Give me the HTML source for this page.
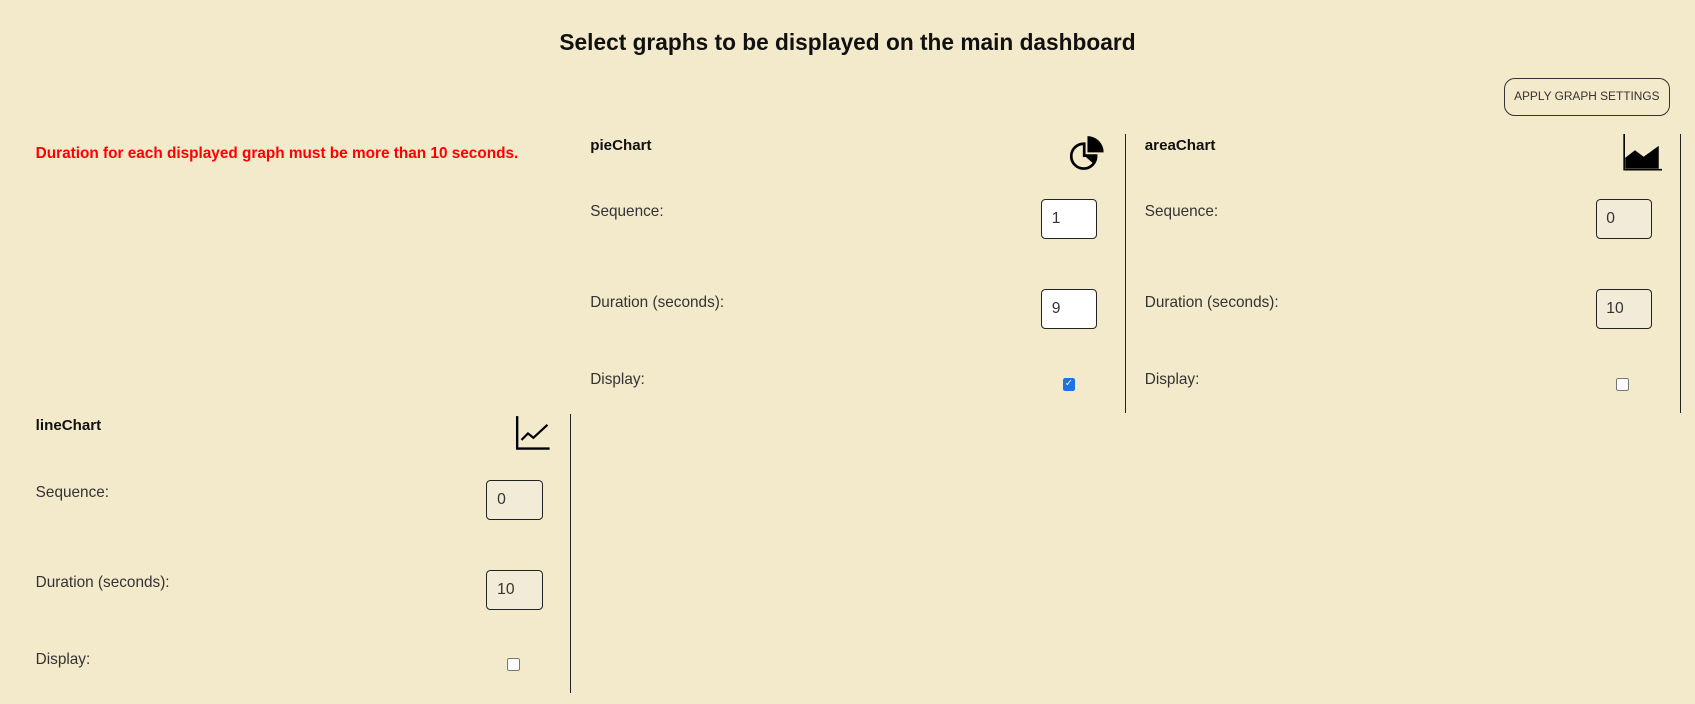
<!DOCTYPE html>
<html><head><meta charset="utf-8"><style>
html,body{margin:0;padding:0;background:#f3e9cb;overflow:hidden}
#w{zoom:1.081;position:relative;width:1568px;height:651px;font-family:"Liberation Sans",sans-serif;color:#333}
.a{position:absolute}
h1{position:absolute;left:0;width:1568px;top:27px;margin:0;text-align:center;font-size:21px;font-weight:bold;color:#111}
.btn{left:1391px;top:72px;width:152px;height:33px;border:1px solid #333;border-radius:10px;font-size:11px;line-height:33px;text-align:center;color:#333}
.red{left:33px;top:134px;color:#f00;font-weight:bold;font-size:14.2px}
.t{font-weight:bold;font-size:14px;color:#111}
.l{font-size:14.2px;color:#333}
.in{width:52px;height:37px;border:1px solid #222;border-radius:4px;box-sizing:border-box;font-size:14.5px;line-height:35px;padding-left:9px;background:#f2ebd8;color:#333}
.in.w{background:#fff}
.vl{width:1px;background:#222}
.cb{width:10px;height:10px;border:1px solid #777;border-radius:2px;background:#fff}
.cb.c{background:#1a73e8;border-color:#1a73e8;color:#fff;font-size:9px;line-height:10px;text-align:center}
</style></head><body><div id="w">
<h1>Select graphs to be displayed on the main dashboard</h1>
<div class="a btn">APPLY GRAPH SETTINGS</div>
<div class="a red">Duration for each displayed graph must be more than 10 seconds.</div>

<div class="a t" style="left:546px;top:127px">pieChart</div>
<svg class="a" style="left:988px;top:124px" width="34" height="34" viewBox="0 0 34 34"><path d="M15 9 A11.5 11.5 0 1 0 26 20 L15 20 Z" fill="none" stroke="#000" stroke-width="2.5"/><path d="M15 20 L26 20 A11.5 11.5 0 0 1 23 27 Z" fill="#000"/><path d="M18 2 V17 H33 A15 15 0 0 0 18 2Z" fill="#000"/></svg>
<div class="a l" style="left:546px;top:188px">Sequence:</div>
<div class="a in w" style="left:963px;top:184px">1</div>
<div class="a l" style="left:546px;top:272px">Duration (seconds):</div>
<div class="a in w" style="left:963px;top:267px">9</div>
<div class="a l" style="left:546px;top:343px">Display:</div>
<div class="a cb c" style="left:983px;top:350px">✓</div>
<div class="a vl" style="left:1041px;top:124px;height:258px"></div>

<div class="a t" style="left:1059px;top:127px">areaChart</div>
<svg class="a" style="left:1500px;top:124px" width="38" height="36" viewBox="0 0 38 36"><path d="M2 0 V33 H37" fill="none" stroke="#000" stroke-width="1.5"/><path d="M3 32 V22 L12 15 L20 21 L34 11 V32 Z" fill="#000"/></svg>
<div class="a l" style="left:1059px;top:188px">Sequence:</div>
<div class="a in" style="left:1476px;top:184px">0</div>
<div class="a l" style="left:1059px;top:272px">Duration (seconds):</div>
<div class="a in" style="left:1476px;top:267px">10</div>
<div class="a l" style="left:1059px;top:343px">Display:</div>
<div class="a cb" style="left:1495px;top:350px"></div>
<div class="a vl" style="left:1554px;top:124px;height:258px"></div>

<div class="a t" style="left:33px;top:386px">lineChart</div>
<svg class="a" style="left:476px;top:383px" width="34" height="34" viewBox="0 0 34 34"><path d="M2 2 V32 H32" fill="none" stroke="#000" stroke-width="2.2"/><path d="M6 24 L12 18 L17 22 L30 10" fill="none" stroke="#000" stroke-width="2"/></svg>
<div class="a l" style="left:33px;top:448px">Sequence:</div>
<div class="a in" style="left:450px;top:444px">0</div>
<div class="a l" style="left:33px;top:531px">Duration (seconds):</div>
<div class="a in" style="left:450px;top:527px">10</div>
<div class="a l" style="left:33px;top:602px">Display:</div>
<div class="a cb" style="left:469px;top:609px"></div>
<div class="a vl" style="left:527px;top:383px;height:258px"></div>
</div></body></html>
